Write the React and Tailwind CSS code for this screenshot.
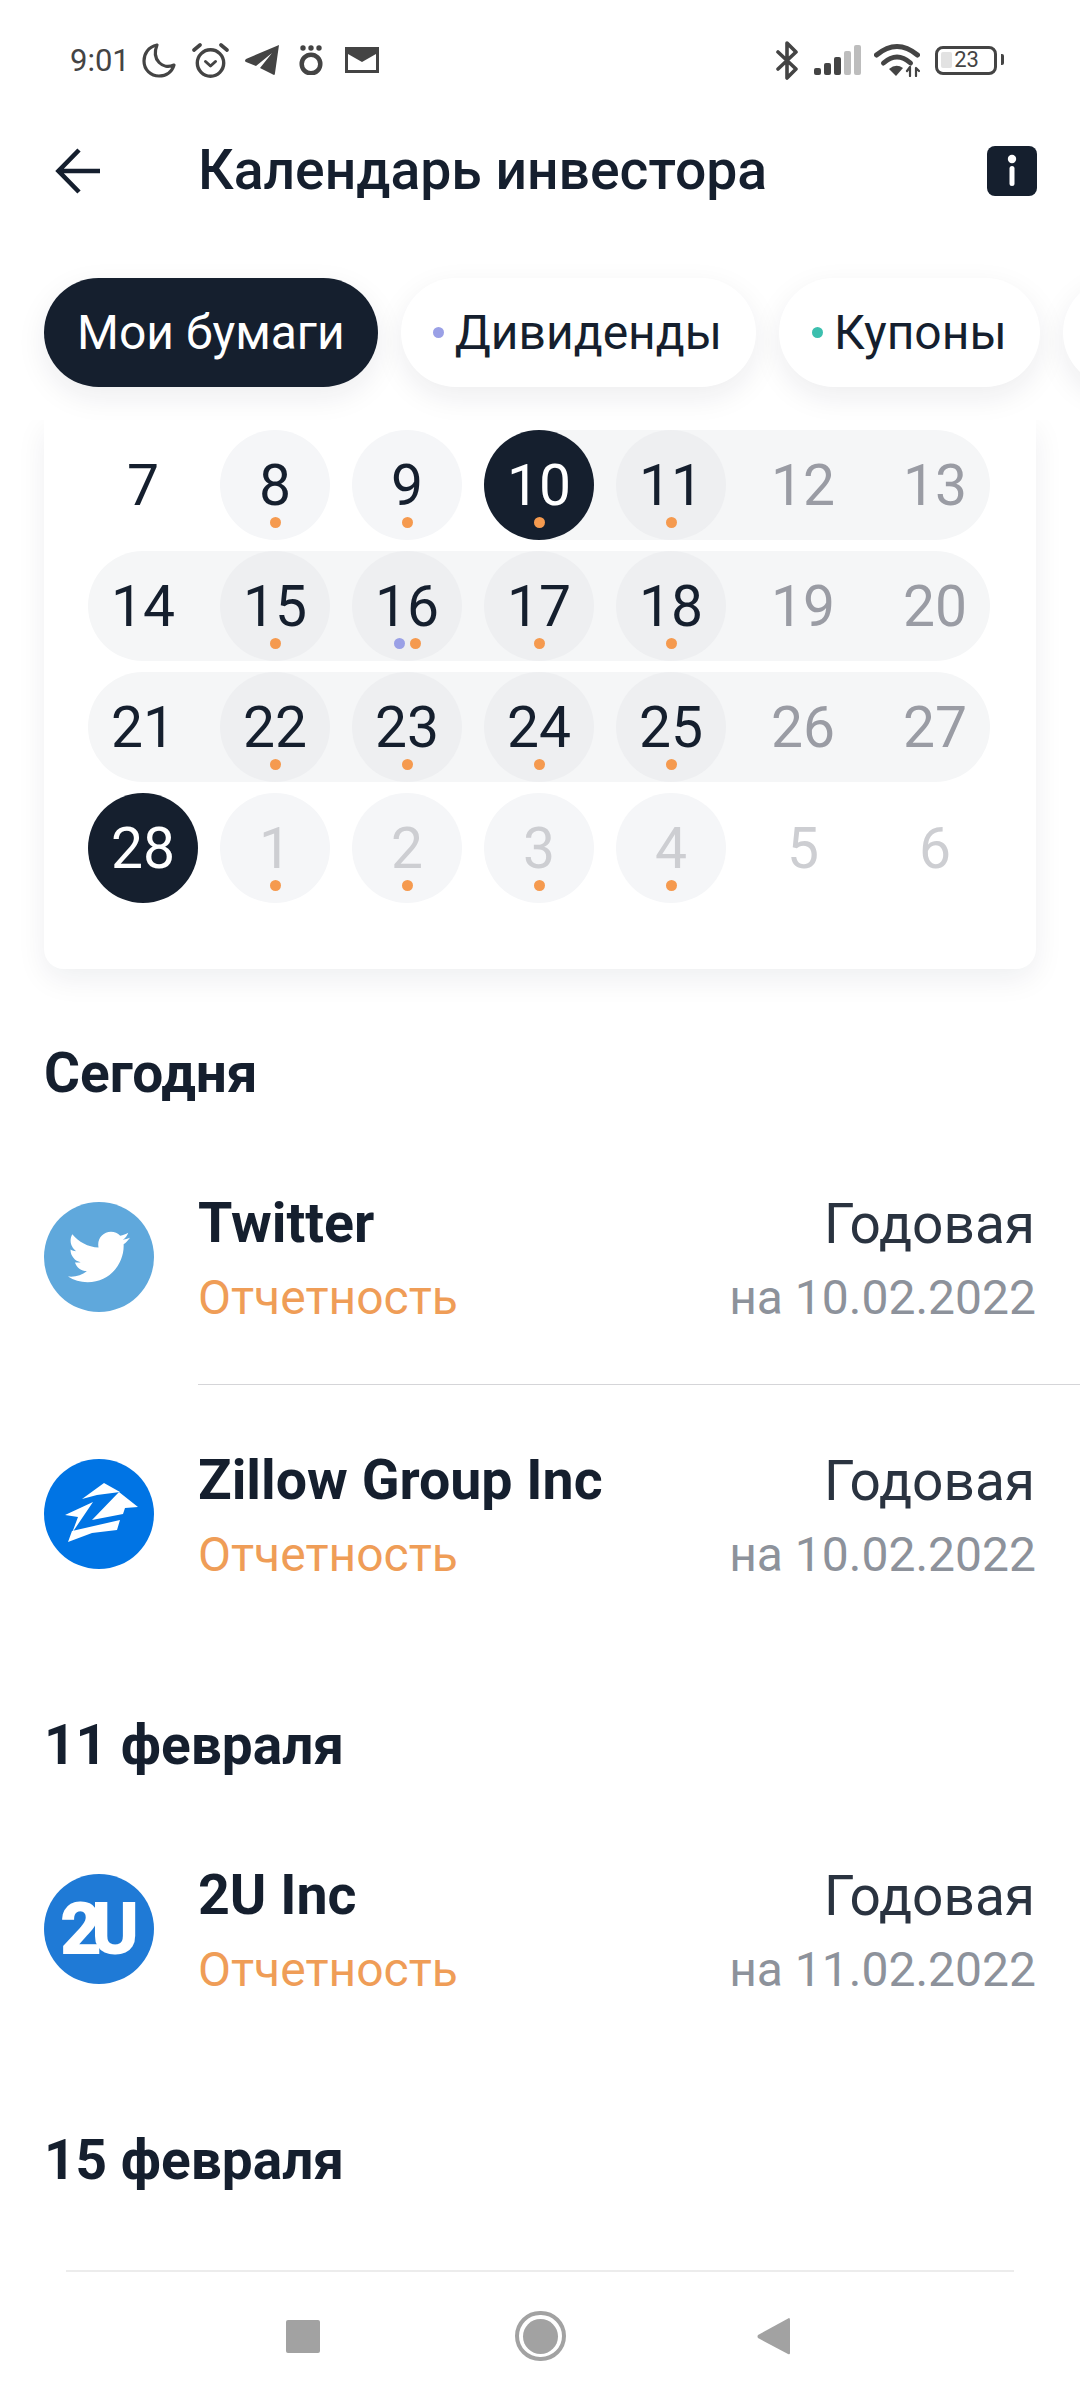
import React from "react";
import { FaTwitter } from "react-icons/fa";

const dark = "#151f2e";

function Moon() {
  return (
    <svg width="34" height="35" viewBox="0 0 34 35" fill="none" stroke="#444" strokeWidth="3.2" strokeLinejoin="round">
      <path d="M15 2 C6 4 2 11 2 18 C2 27 9 33 17 33 C24 33 30 29 32 22 C21 27 9 17 15 2 Z" />
    </svg>
  );
}
function Alarm() {
  return (
    <svg width="39" height="35" viewBox="0 0 39 35" fill="none" stroke="#444" strokeLinecap="round" strokeLinejoin="round">
      <circle cx="19.5" cy="20" r="13.2" strokeWidth="3.4" />
      <path d="M3 7 L9 2 M30 2 L36 7" strokeWidth="3.6" />
      <path d="M14.5 18.5 L19.5 23 L24.5 18.5" strokeWidth="3" />
    </svg>
  );
}
function Plane() {
  return (
    <svg width="34" height="30" viewBox="0 0 34 30" fill="#444">
      <path d="M34 0 L1 14 Q-1 16 1 17 L11 21 L27 8 L15 23 L29 30 Q30 30 30 28 Z" />
    </svg>
  );
}
function OUml() {
  return (
    <svg width="24" height="30" viewBox="0 0 24 30" fill="#444">
      <circle cx="4" cy="3" r="2.7" />
      <circle cx="12" cy="3" r="2.7" />
      <circle cx="20" cy="3" r="2.7" />
      <circle cx="12" cy="19" r="9.3" fill="none" stroke="#444" strokeWidth="4.5" />
    </svg>
  );
}
function Mail() {
  return (
    <svg width="34" height="26" viewBox="0 0 34 26" fill="#444">
      <path d="M0 0 H34 V26 H0 Z M3 7 V23 H31 V7 L17 15 Z" fillRule="evenodd" />
    </svg>
  );
}
function Bt() {
  return (
    <svg width="24" height="39" viewBox="0 0 24 39" fill="none" stroke="#444" strokeWidth="3.6" strokeLinecap="round" strokeLinejoin="round">
      <path d="M3 11 L21 28 L12 37 V2 L21 11 L3 28" />
    </svg>
  );
}
function Signal() {
  return (
    <svg width="47" height="30" viewBox="0 0 47 30">
      <rect x="0" y="23" width="7" height="7" rx="2" fill="#444" />
      <rect x="10" y="18" width="7" height="12" rx="2" fill="#444" />
      <rect x="20" y="12" width="7" height="18" rx="2" fill="#444" />
      <rect x="30" y="6" width="7" height="24" rx="2" fill="#bdbdbd" />
      <rect x="40" y="0" width="7" height="30" rx="2" fill="#bdbdbd" />
    </svg>
  );
}
function Wifi() {
  return (
    <svg width="46" height="34" viewBox="0 0 46 34" fill="none" stroke="#444" strokeLinecap="round">
      <path d="M2.5 12 Q23 -5 43.5 12" strokeWidth="5" />
      <path d="M9.5 20 Q23 8 36.5 20" strokeWidth="5" />
      <path d="M15 26 Q22 20 29 25 L22 33 Z" fill="#444" stroke="none" />
      <path d="M36 24 V33 M42 33 V25 M33 28 L36 24 M42 25 L45 28" strokeWidth="2.2" />
    </svg>
  );
}
function Battery() {
  return (
    <div className="relative flex h-[29px] w-[62px] items-center justify-center rounded-[8px] border-[3.5px] border-[#444] pl-[1px]">
      <span className="absolute left-[3px] top-[3px] h-[16px] w-[11px] rounded-[2px] bg-[#e2e2e2]" />
      <span className="relative text-[22px] leading-none text-[#444]">23</span>
      <span className="absolute right-[-10px] top-[5px] h-[11px] w-[3.5px] rounded-r-[2px] bg-[#444]" />
    </div>
  );
}

function Chip({ children, dot, className }) {
  return (
    <div className={"flex h-[109px] shrink-0 items-center rounded-full text-[48px] shadow-[0_10px_30px_rgba(20,30,50,0.08)] " + className}>
      {dot}
      <span className="whitespace-nowrap">{children}</span>
    </div>
  );
}

function Day({ n, dots = [], variant = "", text = "text-[#151f2e]" }) {
  return (
    <div className={"relative flex h-[110px] w-[110px] shrink-0 items-center justify-center rounded-full text-[57px] font-[385] leading-none " + variant + " " + text}>
      <span>{n}</span>
      {dots.length > 0 && (
        <div className="absolute bottom-[12px] left-0 right-0 flex justify-center gap-[5px]">
          {dots.map((c, i) => (
            <span key={i} className="h-[11px] w-[11px] rounded-full" style={{ backgroundColor: c }} />
          ))}
        </div>
      )}
    </div>
  );
}

const O = "#f59a4f";
const P = "#9aa0e6";
const LIGHT = "bg-[#f5f6f8]";
const MID = "bg-[#eeeff1]";
const DARK = "bg-[#151f2e]";
const WEEKEND = "text-[#9a9ca4]";
const FADED = "text-[#cdced2]";

function Pill({ children, className = "" }) {
  return <div className={"flex gap-[22px] rounded-full bg-[#f5f6f7] " + className}>{children}</div>;
}

function Row({ logo, name, date }) {
  return (
    <div className="flex h-[148px] px-[44px]">
      <div className="mt-[15px] mr-[44px] shrink-0">{logo}</div>
      <div className="flex flex-1 flex-col">
        <div className="flex h-[74px] items-center justify-between">
          <span className="text-[55.5px] font-bold text-[#151f2e]">{name}</span>
          <span className="pr-[1px] text-[55px] text-[#2a3340]">Годовая</span>
        </div>
        <div className="flex h-[74px] items-center justify-between">
          <span className="text-[48px] text-[#ef9d57]">Отчетность</span>
          <span className="text-[48px] text-[#8d929b]">{date}</span>
        </div>
      </div>
    </div>
  );
}

function Heading({ children, className = "" }) {
  return <div className={"flex h-[60px] items-center px-[44px] text-[55px] font-bold text-[#151f2e] " + className}>{children}</div>;
}

function TwitterLogo() {
  return (
    <div className="flex h-[110px] w-[110px] items-center justify-center rounded-full bg-[#5fa8dc]">
      <FaTwitter size={62} color="#fff" />
    </div>
  );
}
function ZillowLogo() {
  return (
    <svg width="110" height="110" viewBox="0 0 110 110">
      <circle cx="55" cy="55" r="55" fill="#0074e4" />
      <g fill="#fff">
        <polygon points="38,40 60,24 76,33 53,36" />
        <polygon points="75,33 94,48 81,49 79,55 48,61" />
        <polygon points="21,56 49,43 28,74 34,58" />
        <polygon points="24,83 28,72 76,61 73,71 48,74" />
      </g>
    </svg>
  );
}
function TwoULogo() {
  return (
    <div className="flex h-[110px] w-[110px] items-center justify-center rounded-full bg-[#1f7ad6] text-[70px] font-bold leading-none tracking-[-9px] text-white [-webkit-text-stroke:2px_white]">
      <span className="pr-[8px]">2U</span>
    </div>
  );
}

export default function App() {
  return (
    <div className="flex h-[2400px] w-[1080px] flex-col overflow-hidden bg-white font-['Roboto',sans-serif] text-[#151f2e]">
      {/* status bar */}
      <div className="flex h-[120px] shrink-0 items-center pl-[70px] pr-[77px] text-[#444]">
        <span className="mr-[12px] text-[31px] leading-none">9:01</span>
        <div className="mr-[15px]"><Moon /></div>
        <div className="mr-[15px]"><Alarm /></div>
        <div className="mr-[20px]"><Plane /></div>
        <div className="mr-[22px]"><OUml /></div>
        <Mail />
        <div className="ml-auto flex items-center">
          <div className="mr-[15px]"><Bt /></div>
          <div className="mr-[13px]"><Signal /></div>
          <div className="mr-[15px]"><Wifi /></div>
          <div className="mr-[6px]"><Battery /></div>
        </div>
      </div>

      {/* title */}
      <div className="flex h-[102px] shrink-0 items-center pl-[55px] pr-[43px]">
        <svg width="46" height="46" viewBox="0 0 46 46" fill="none" stroke={dark} strokeWidth="4.6" className="mr-[97px]">
          <path d="M45 23 H4 M24 2 L3.5 23 L24 44" />
        </svg>
        <span className="text-[55.3px] font-medium leading-none">Календарь инвестора</span>
        <svg width="50" height="50" viewBox="0 0 50 50" className="ml-auto">
          <rect width="50" height="50" rx="8" fill={dark} />
          <circle cx="25" cy="13" r="4.2" fill="#fff" />
          <rect x="22.5" y="20" width="5" height="20" rx="2.5" fill="#fff" />
        </svg>
      </div>

      {/* chips */}
      <div className="flex h-[198px] shrink-0 gap-[23px] overflow-hidden pl-[44px] pt-[56px]">
        <Chip className="bg-[#151f2e] pl-[33px] pr-[33px] text-white">Мои бумаги</Chip>
        <Chip className="bg-white pl-[32px] pr-[34px]" dot={<span className="mr-[11px] h-[11px] w-[11px] rounded-full bg-[#9aa0e6]" />}>Дивиденды</Chip>
        <Chip className="bg-white pl-[33px] pr-[33px]" dot={<span className="mr-[11px] h-[11px] w-[11px] rounded-full bg-[#3cbfae]" />}>Купоны</Chip>
        <div className="h-[109px] w-[200px] shrink-0 rounded-full bg-white shadow-[0_10px_30px_rgba(20,30,50,0.08)]" />
      </div>

      {/* scrolling content */}
      <div className="min-h-0 flex-1 overflow-hidden">
        <div className="mx-[44px] flex flex-col gap-[11px] rounded-b-[20px] bg-white pb-[66px] pl-[44px] pt-[10px] shadow-[0_10px_30px_rgba(20,30,50,0.07)]">
          <div className="flex gap-[22px]">
            <Day n="7" />
            <Day n="8" dots={[O]} variant={LIGHT} />
            <Day n="9" dots={[O]} variant={LIGHT} />
            <Pill>
              <Day n="10" dots={[O]} variant={DARK} text="text-white" />
              <Day n="11" dots={[O]} variant={MID} />
              <Day n="12" text={WEEKEND} />
              <Day n="13" text={WEEKEND} />
            </Pill>
          </div>
          <Pill className="w-[902px]">
            <Day n="14" />
            <Day n="15" dots={[O]} variant={MID} />
            <Day n="16" dots={[P, O]} variant={MID} />
            <Day n="17" dots={[O]} variant={MID} />
            <Day n="18" dots={[O]} variant={MID} />
            <Day n="19" text={WEEKEND} />
            <Day n="20" text={WEEKEND} />
          </Pill>
          <Pill className="w-[902px]">
            <Day n="21" />
            <Day n="22" dots={[O]} variant={MID} />
            <Day n="23" dots={[O]} variant={MID} />
            <Day n="24" dots={[O]} variant={MID} />
            <Day n="25" dots={[O]} variant={MID} />
            <Day n="26" text={WEEKEND} />
            <Day n="27" text={WEEKEND} />
          </Pill>
          <div className="flex gap-[22px]">
            <Day n="28" variant={DARK} text="text-white" />
            <Day n="1" dots={[O]} variant={LIGHT} text={FADED} />
            <Day n="2" dots={[O]} variant={LIGHT} text={FADED} />
            <Day n="3" dots={[O]} variant={LIGHT} text={FADED} />
            <Day n="4" dots={[O]} variant={LIGHT} text={FADED} />
            <Day n="5" text={FADED} />
            <Day n="6" text={FADED} />
          </div>
        </div>

        <Heading className="mt-[74px] mb-[84px]">Сегодня</Heading>
        <Row logo={<TwitterLogo />} name="Twitter" date="на 10.02.2022" />
        <div className="mb-[59px] ml-[198px] mt-[49px] h-px bg-[#d5d5d8]" />
        <Row logo={<ZillowLogo />} name="Zillow Group Inc" date="на 10.02.2022" />

        <Heading className="mt-[123px] mb-[84px]">11 февраля</Heading>
        <Row logo={<TwoULogo />} name="2U Inc" date="на 11.02.2022" />

        <Heading className="mt-[123px]">15 февраля</Heading>
      </div>

      {/* bottom navigation */}
      <div className="mx-[66px] flex h-[130px] shrink-0 items-center justify-center border-t-2 border-[#ececec] pr-[4px]">
        <div className="mr-[195px] h-[33px] w-[34px] rounded-[2px] bg-[#a2a2a2]" />
        <div className="mr-[191px] flex h-[50px] w-[51px] items-center justify-center rounded-full border-[4px] border-[#a2a2a2]">
          <div className="h-[35px] w-[35px] rounded-full bg-[#a2a2a2]" />
        </div>
        <svg width="33" height="37" viewBox="0 0 33 37" fill="#a2a2a2">
          <path d="M32 0 Q33 0 33 2 V35 Q33 37 31 36 L1 20 Q0 18.5 1 17 Z" />
        </svg>
      </div>
    </div>
  );
}
